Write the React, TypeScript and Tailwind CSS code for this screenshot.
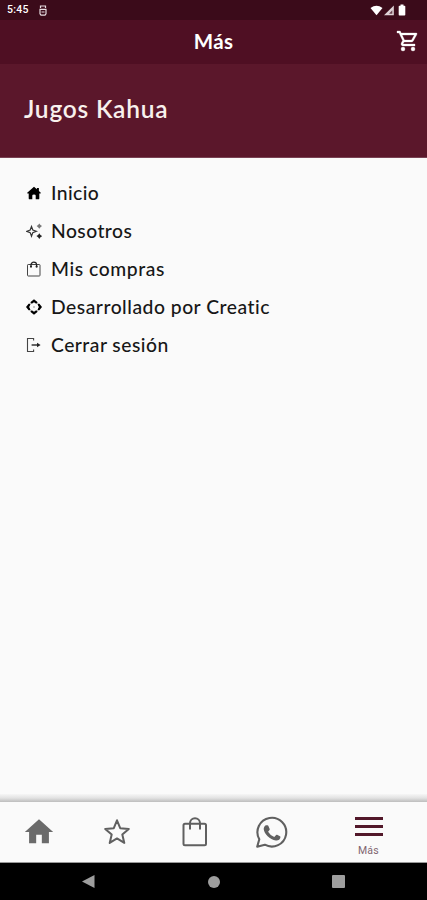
import React from "react";

type IconProps = { className?: string };

const HomeIcon = ({ className }: IconProps) => (
  <svg viewBox="0 0 24 24" className={className} fill="currentColor">
    <path d="M10 20v-6h4v6h5v-8h3L12 3 2 12h3v8z" />
  </svg>
);

const RoundHomeIcon = ({ className }: IconProps) => (
  <svg viewBox="0 0 16 16" className={className} fill="currentColor">
    <path d="M8 1.7 1.2 7.8Q.9 8.6 1.7 8.6H2.7V13.4q0 .9 1 .9H6.3V10.5Q6.3 9.5 8 9.5t1.7 1v3.8h2.6q1 0 1-.9V8.6h1q.8 0 .5-.8L12.9 6V2.9h-2v1.4z" />
  </svg>
);

const SparkleIcon = ({ className }: IconProps) => (
  <svg viewBox="0 0 16 16" className={className}>
    <path d="M5.5 3.4 6.8 7l3.5 1.3-3.5 1.3-1.3 3.6-1.3-3.6L.8 8.3 4.2 7z" fill="none" stroke="#333" strokeWidth="1.2" />
    <path d="m13.3.4 1.2 1.5 1.5 1.2-1.5 1.2-1.2 1.5-1.2-1.5-1.5-1.2 1.5-1.2z" fill="#777" />
    <path d="m13.3 10.2 1.2 1.7 1.7 1.2-1.7 1.2-1.2 1.7-1.2-1.7-1.7-1.2 1.7-1.2z" fill="#222" />
  </svg>
);

const BagIcon = ({ className }: IconProps) => (
  <svg viewBox="0 0 16 16" className={className} fill="none" stroke="#444" strokeWidth="1">
    <rect x="1.5" y="3.5" width="12.5" height="11.5" rx=".7" />
    <path d="M5 6.6V4a2.8 2.8 0 0 1 5.6 0v2.6" stroke="#222" strokeWidth="1.2" />
    <path d="M4 5.5h2M9.6 5.5h2" stroke="#222" strokeWidth="1.5" />
  </svg>
);

const ComponentsIcon = ({ className }: IconProps) => (
  <svg viewBox="0 0 16 16" className={className}>
    <path
      d="M8 .2 11.4 3v1.4H9.8L8 3.3 6.2 4.4H4.6V3zM8 15.8l3.4-2.8v-1.4H9.8L8 12.7l-1.8-1.1H4.6V13zM0 8l2.6-3.2H4v1.6L3.1 8l.9 1.6v1.6H2.6zM16 8l-2.6-3.2H12v1.6l.9 1.6-.9 1.6v1.6h1.4z"
      fill="currentColor"
    />
    <path d="M4.2 5.8 5.4 4.6M10.6 4.6l1.2 1.2M4.2 10.2l1.2 1.2M10.6 11.4l1.2-1.2" stroke="#888" strokeWidth=".8" />
    <circle cx="8" cy="8" r=".8" fill="#888" />
  </svg>
);

const LogoutIcon = ({ className }: IconProps) => (
  <svg viewBox="0 0 16 16" className={className}>
    <path d="M7.6 3.5V1.5H1.5v13h6.1v-2" fill="none" stroke="#444" strokeWidth="1.1" />
    <path d="M5.6 8h6" stroke="currentColor" strokeWidth="1.2" />
    <path d="M11 5.8v4.4L14.6 8z" fill="#222" />
  </svg>
);

const CartIcon = ({ className }: IconProps) => (
  <svg viewBox="0 0 24 24" className={className} fill="currentColor" stroke="currentColor" strokeWidth=".3">
    <path d="M15.55 13c.75 0 1.41-.41 1.75-1.03l3.58-6.49A.996.996 0 0 0 20.01 4H5.21l-.94-2H1v2h2l3.6 7.59-1.35 2.44C4.52 15.37 5.48 17 7 17h12v-2H7l1.1-2h7.45zM6.16 6h12.15l-2.76 5H8.53L6.16 6zM7 18a2 2 0 1 0 0 4 2 2 0 0 0 0-4zm10 0a2 2 0 1 0 0 4 2 2 0 0 0 0-4z" />
  </svg>
);

const StarIcon = ({ className }: IconProps) => (
  <svg viewBox="0 0 28 28" className={className} fill="none" stroke="currentColor" strokeWidth="2" strokeLinejoin="round">
    <path d="m14 2.3 3.2 7.9 8.6.7-6.5 5.6 2 8.4-7.3-4.5-7.3 4.5 2-8.4-6.5-5.6 8.6-.7z" />
  </svg>
);

const ShoppingBagIcon = ({ className }: IconProps) => (
  <svg viewBox="0 0 28 32" className={className} fill="none" stroke="currentColor" strokeWidth="2">
    <rect x="2.5" y="7.8" width="22.5" height="21.5" rx="1.5" />
    <path d="M9 13.5V7.3a5 5 0 0 1 10 0v6.2" />
  </svg>
);

const WhatsappIcon = ({ className }: IconProps) => (
  <svg viewBox="0 0 34 34" className={className}>
    <path d="m2.2 31.7 2.1-7.5A14.4 14.4 0 1 1 9.8 29.7z" fill="none" stroke="currentColor" strokeWidth="2.1" strokeLinejoin="round" />
    <path d="M11.3 10.2h1.2q.7 0 .9.8l1.3 2.9q.2.6-.2 1.1l-1.4 1.7q2.3 3.9 6.2 5.3l1.8-2q.4-.5 1-.2l2.9 1.4q.6.3.5.9c-.2 2.8-2.7 3.7-4.7 3.4C15 24.6 9 18.8 8.7 14c0-1.7 1.2-3.8 2.6-3.8z" fill="currentColor" />
  </svg>
);

const menu = [
  { label: "Inicio", Icon: RoundHomeIcon, text: "tracking-[0.4px]" },
  { label: "Nosotros", Icon: SparkleIcon, text: "tracking-[0.45px]" },
  { label: "Mis compras", Icon: BagIcon, text: "tracking-[0.58px]" },
  { label: "Desarrollado por Creatic", Icon: ComponentsIcon, text: "tracking-[0.52px]" },
  { label: "Cerrar sesión", Icon: LogoutIcon, text: "tracking-[0.48px]" },
];

export default function App() {
  return (
    <div className="flex h-[900px] w-full flex-col overflow-hidden bg-[#fafafa] font-['Lato',sans-serif]">
      <div className="flex h-5 shrink-0 items-center justify-between bg-[#3b0b1a] pl-[7px] pr-[21px] text-white">
        <div className="flex items-center gap-[10px]">
          <span className="font-['Roboto',sans-serif] text-[10.5px] font-medium leading-5 tracking-[0.25px]">5:45</span>
          <svg viewBox="0 0 8 11" className="h-[11px] w-2" fill="none" stroke="#e5dce0" strokeWidth="1.2">
            <path d="M1.5 3V1h5v2M1 4.3h6v4.5l-1 1.4H2L1 8.8zM2.5 7h3" />
          </svg>
        </div>
        <div className="flex items-center">
          <svg viewBox="0 0 13 11" className="h-[11px] w-[13px]" fill="white">
            <path d="M.5 3Q6.5-1.3 12.5 3L6.5 10.3z" />
          </svg>
          <svg viewBox="0 0 12 11" className="h-[11px] w-3">
            <path d="M1 10.3 10.8.5v9.8z" fill="#ded3d7" />
            <path d="m6 8.8 3.3-3.5v3.5z" fill="#6b4350" />
          </svg>
          <svg viewBox="0 0 8 12" className="ml-[3px] h-3 w-2" fill="white">
            <path d="M2.5.5h3v1.2h1q.8 0 .8.8v8.2q0 .8-.8.8h-5q-.8 0-.8-.8V2.5q0-.8.8-.8h1z" />
          </svg>
        </div>
      </div>

      <header className="grid h-11 shrink-0 grid-cols-[1fr_auto_1fr] items-center bg-[#4f0f23] pb-[2px] text-white">
        <span />
        <h1 className="text-[20.5px] font-bold leading-6 tracking-[0.3px]">Más</h1>
        <CartIcon className="mr-[7px] h-[24px] w-[24px] justify-self-end" />
      </header>

      <section className="flex h-[94px] shrink-0 items-center border-b border-[#794253] bg-[#5b172b] pl-6 pb-[3px]">
        <h2 className="text-[24.5px] font-semibold leading-8 tracking-[0.77px] text-[#f8f1ed]">Jugos Kahua</h2>
      </section>

      <main className="flex-1 pt-4 pl-[26px]">
        <ul>
          {menu.map(({ label, Icon, text }) => (
            <li key={label} className="flex h-[38px] items-center text-[#171717]">
              <Icon className="h-4 w-4 shrink-0 text-black" />
              <span className={`ml-[9px] whitespace-nowrap text-[19.3px] font-medium leading-6 ${text}`}>{label}</span>
            </li>
          ))}
        </ul>
      </main>

      <div className="h-2 shrink-0 bg-linear-to-b from-[#f6f6f6] via-[#e2e2e2] to-[#bdbdbd]" />
      <nav className="flex h-[61px] shrink-0 items-center border-b border-[#999] bg-[#fafafa] text-[#606060]">
        <div className="flex w-[78px] justify-center"><HomeIcon className="h-[34px] w-[34px] text-[#6b6b6b]" /></div>
        <div className="flex w-[78px] justify-center"><StarIcon className="h-7 w-7" /></div>
        <div className="flex w-[78px] justify-center"><ShoppingBagIcon className="h-8 w-7" /></div>
        <div className="flex w-[76px] justify-center"><WhatsappIcon className="h-[34px] w-[34px]" /></div>
        <div className="flex flex-1 flex-col items-center pt-[10px]">
          <div className="flex w-7 flex-col gap-[5px]">
            <i className="h-[3px] bg-[#52182a]" />
            <i className="h-[3px] bg-[#52182a]" />
            <i className="h-[3px] bg-[#52182a]" />
          </div>
          <span className="mt-[9px] font-['Roboto',sans-serif] text-[10.5px] leading-3 tracking-[0.3px] text-[#806570]">Más</span>
        </div>
      </nav>

      <footer className="flex h-[37px] shrink-0 items-center justify-between bg-black pl-[82px] pr-[82px]">
        <svg viewBox="0 0 13 15" className="h-[15px] w-[13px]" fill="#9e9e9e"><path d="M0 7.5 12.5 1v13z" /></svg>
        <i className="h-3 w-3 rounded-full bg-[#9e9e9e]" />
        <i className="h-[13px] w-[13px] rounded-[1px] bg-[#9e9e9e]" />
      </footer>
    </div>
  );
}
